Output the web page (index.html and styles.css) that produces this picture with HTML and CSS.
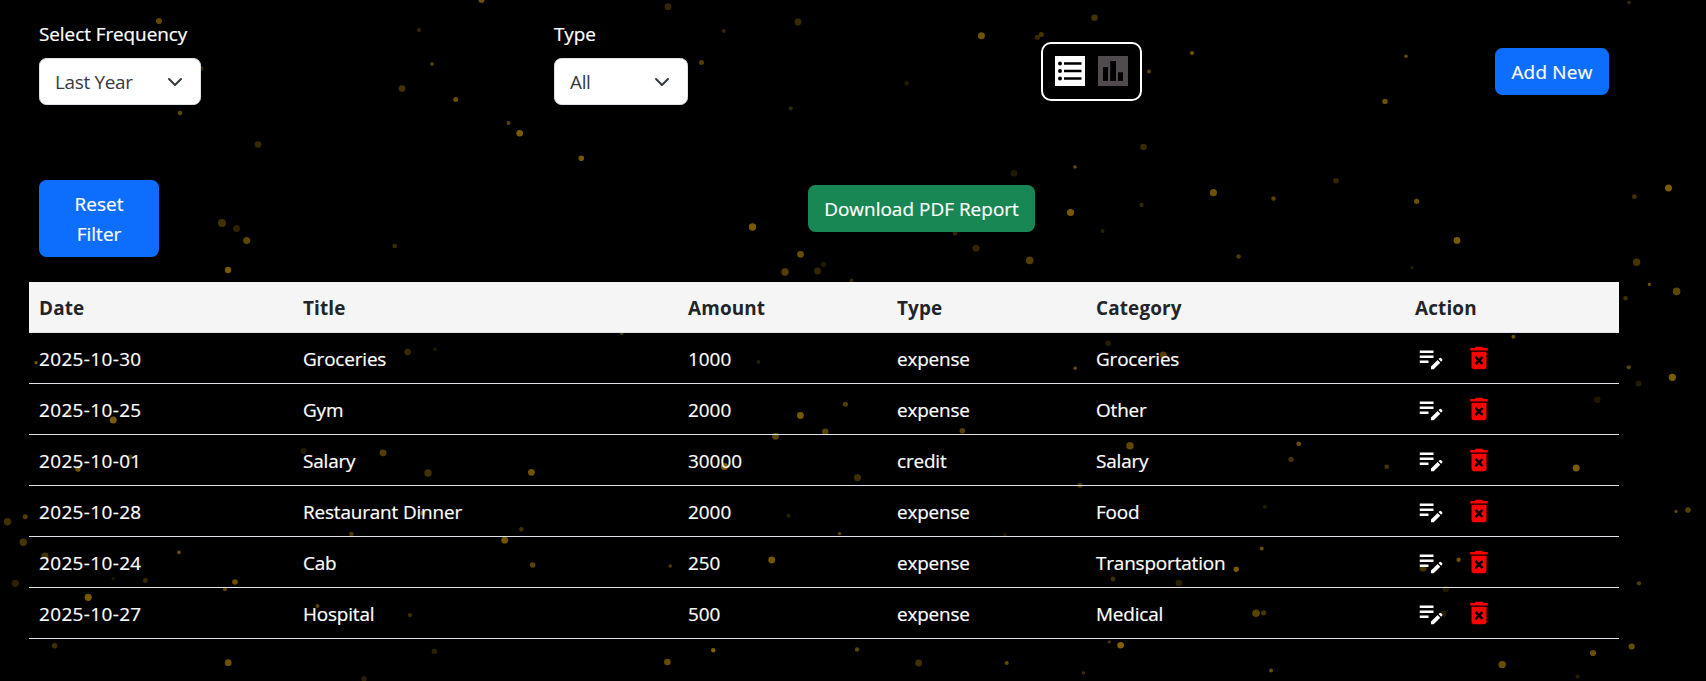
FILE: index.html
```html
<!DOCTYPE html>
<html lang="en">
<head>
<meta charset="utf-8">
<title>Transactions</title>
<link rel="stylesheet" href="styles.css">
</head>
<body>
<svg class="particles" id="particles" width="1706" height="681" aria-hidden="true"></svg>

<svg class="defs" aria-hidden="true">
  <symbol id="i-chevron" viewBox="0 0 16 16"><path d="m2 5 6 6 6-6" fill="none" stroke="#343a40" stroke-width="2" stroke-linecap="round" stroke-linejoin="round"/></symbol>
  <symbol id="i-edit" viewBox="0 0 24 24"><path d="M3 10h11v2H3v-2zm0-2h11V6H3v2zm0 8h7v-2H3v2zm15.01-3.13.71-.71a.996.996 0 0 1 1.41 0l.71.71c.39.39.39 1.02 0 1.41l-.71.71-2.12-2.12zm-.71.71-5.3 5.3V21h2.12l5.3-5.3-2.12-2.12z"/></symbol>
  <symbol id="i-delete" viewBox="0 0 24 24"><path d="M6 19c0 1.1.9 2 2 2h8c1.1 0 2-.9 2-2V7H6v12zm2.46-7.12 1.41-1.41L12 12.59l2.12-2.12 1.41 1.41L13.41 14l2.12 2.12-1.41 1.41L12 15.41l-2.12 2.12-1.41-1.41L10.59 14l-2.13-2.12zM15.5 4l-1-1h-5l-1 1H5v2h14V4z"/></symbol>
</svg>

<main class="page">
  <section class="filters">
    <div class="field">
      <span class="label">Select Frequency</span>
      <div class="select select-frequency"><span>Last Year</span><svg class="chevron"><use href="#i-chevron"/></svg></div>
    </div>
    <div class="field">
      <span class="label">Type</span>
      <div class="select select-type"><span>All</span><svg class="chevron"><use href="#i-chevron"/></svg></div>
    </div>
    <div class="views">
      <svg class="view view-on" viewBox="0 0 30 30"><path d="M0 0h30v30H0z"/><g fill="#000"><circle cx="5" cy="7.4" r="2"/><circle cx="5" cy="14.9" r="2"/><circle cx="5" cy="22.4" r="2"/><path d="M9 6.2h17.5v2.6H9zM9 13.7h17.5v2.6H9zM9 21.2h17.5v2.6H9z"/></g></svg>
      <svg class="view view-off" viewBox="0 0 30 30"><path d="M0 0h30v30H0z"/><path fill="#000" d="M5 11h5v14H5zM12.2 5h5.8v20h-5.8zM20 16.3h5V25h-5z"/></svg>
    </div>
    <button class="btn btn-primary">Add New</button>
  </section>

  <section class="actions">
    <button class="btn btn-primary btn-reset">Reset Filter</button>
    <button class="btn btn-success">Download PDF Report</button>
  </section>

  <table class="table">
    <colgroup><col class="c-date"><col class="c-title"><col class="c-amount"><col class="c-type"><col class="c-category"><col></colgroup>
    <thead><tr><th>Date</th><th>Title</th><th>Amount</th><th>Type</th><th>Category</th><th>Action</th></tr></thead>
    <tbody>
      <tr><td class="date">2025-10-30</td><td>Groceries</td><td class="amount">1000</td><td>expense</td><td>Groceries</td><td class="action"><div class="icons"><svg class="edit"><use href="#i-edit"/></svg><svg class="delete"><use href="#i-delete"/></svg></div></td></tr>
      <tr><td class="date">2025-10-25</td><td>Gym</td><td class="amount">2000</td><td>expense</td><td>Other</td><td class="action"><div class="icons"><svg class="edit"><use href="#i-edit"/></svg><svg class="delete"><use href="#i-delete"/></svg></div></td></tr>
      <tr><td class="date">2025-10-01</td><td>Salary</td><td class="amount">30000</td><td>credit</td><td>Salary</td><td class="action"><div class="icons"><svg class="edit"><use href="#i-edit"/></svg><svg class="delete"><use href="#i-delete"/></svg></div></td></tr>
      <tr><td class="date">2025-10-28</td><td>Restaurant Dinner</td><td class="amount">2000</td><td>expense</td><td>Food</td><td class="action"><div class="icons"><svg class="edit"><use href="#i-edit"/></svg><svg class="delete"><use href="#i-delete"/></svg></div></td></tr>
      <tr><td class="date">2025-10-24</td><td>Cab</td><td class="amount">250</td><td>expense</td><td>Transportation</td><td class="action"><div class="icons"><svg class="edit"><use href="#i-edit"/></svg><svg class="delete"><use href="#i-delete"/></svg></div></td></tr>
      <tr><td class="date">2025-10-27</td><td>Hospital</td><td class="amount">500</td><td>expense</td><td>Medical</td><td class="action"><div class="icons"><svg class="edit"><use href="#i-edit"/></svg><svg class="delete"><use href="#i-delete"/></svg></div></td></tr>
    </tbody>
  </table>
</main>
<script src="particles.js"></script>
</body>
</html>
```

FILE: styles.css
```css
* { box-sizing: border-box; }

body {
  margin: 0;
  height: 681px;
  overflow: hidden;
  background: #000;
  color: #fff;
  font-family: "Open Sans", "Noto Sans", sans-serif;
  font-size: 18.9px;
  line-height: 30px;
}

.particles {
  position: absolute;
  top: 0;
  left: 0;
  z-index: -1;
  fill: #ffc000;
}

.defs { display: none; }

.page {
  width: 1590px;
  margin-left: 29px;
}

.filters {
  display: flex;
  justify-content: space-between;
  align-items: flex-start;
  height: 105px;
  padding: 19px 10px 0;
}

.field {
  display: flex;
  flex-direction: column;
  gap: 9px;
}

.label {
  letter-spacing: -0.05px;
  -webkit-text-stroke: 0.2px currentColor;
}

.select {
  display: flex;
  align-items: center;
  justify-content: space-between;
  height: 47px;
  padding: 0 17px 0 15px;
  border: 1px solid #dee2e6;
  border-radius: 7.5px;
  background: #fff;
  color: #343a40;
  letter-spacing: -0.3px;
}

.select-frequency { width: 162px; }
.select-type { width: 134px; }
.chevron { width: 16px; height: 16px; }

.views {
  display: flex;
  gap: 13px;
  width: 101px;
  height: 59px;
  margin-top: 23px;
  padding: 12px;
  border: 2px solid #fff;
  border-radius: 10px;
}

.view { width: 30px; height: 30px; }
.view-on { fill: #fff; }
.view-off { fill: #514b4f; }

.btn {
  height: 47px;
  padding: 0;
  border: 1px solid transparent;
  border-radius: 7.5px;
  color: #fff;
  font: inherit;
  letter-spacing: 0.05px;
  white-space: nowrap;
  -webkit-text-stroke: 0.2px currentColor;
}

.filters .btn { margin-top: 29px; letter-spacing: 0.25px; }

.btn-primary { width: 114px; background: #0d6efd; }
.btn-success { width: 227px; margin-top: 5px; background: #198754; }

.actions {
  display: flex;
  align-items: flex-start;
  justify-content: space-between;
  height: 77px;
  margin-top: 75px;
  padding: 0 584px 0 10px;
}

.actions .btn-reset {
  width: 120px;
  height: 77px;
  padding: 0 15px;
  white-space: normal;
}

.table {
  width: 1590px;
  margin-top: 25px;
  border-collapse: separate;
  border-spacing: 0;
  table-layout: fixed;
}

.table th, .table td {
  height: 51px;
  padding: 11px 10px 9px;
  border-bottom: 1px solid #dee2e6;
  text-align: left;
  vertical-align: middle;
}

.table th {
  background: #f5f5f5;
  color: #212529;
  font-weight: 700;
  letter-spacing: 0.15px;
}

.table td {
  letter-spacing: -0.15px;
  -webkit-text-stroke: 0.2px currentColor;
}

.table .date { letter-spacing: 0.4px; }
.table .amount { letter-spacing: 0; }
.table .action { padding: 10px 10px 10px 11px; }

.c-date { width: 264px; }
.c-title { width: 385px; }
.c-amount { width: 209px; }
.c-type { width: 199px; }
.c-category { width: 319px; }

.icons { display: flex; gap: 18px; height: 30px; }
.icons svg { width: 30px; height: 30px; }
.edit { fill: #fff; }
.delete { fill: #f00; }
```

FILE: particles.js
```js
// Each particle: x, y, radius, opacity
const particles = [
  [159,21,3,.38],[419,30,2,.2],[201,68.5,2.5,.2],[402,88.5,3.3,.27],[180,113,2.3,.36],[258,144.5,3.3,.22],
  [222,223,4,.26],[236.5,228.5,3.5,.18],[246.7,240.5,3.6,.36],[394.7,246,2.3,.22],[228,270,3.2,.46],
  [481.5,0,3,.42],[668,6.7,3.4,.2],[798,22,3.4,.22],[723.7,31,2,.2],[432,64,2,.32],[701.5,62.5,2.5,.32],
  [455.7,99.5,2.5,.4],[790.7,108.3,2.1,.2],[508.5,123,2,.34],[519.7,133.3,3.3,.48],[581.3,158.3,2.8,.46],
  [752.5,227,3.7,.47],[800.5,254.3,3.4,.4],[785,272,3.7,.33],[817.5,271,3.4,.2],[823.5,264.5,2.7,.12],
  [851.5,280.5,2,.2],[621.7,333,2,.3],
  [1094.5,17.7,3.3,.26],[981.4,35.7,3.5,.43],[1041.3,34.5,2.5,.28],[1037.3,37.3,2.5,.22],[1192,53,2.1,.43],
  [1149,71.6,2,.34],[906.7,83.3,2.3,.13],[1143.5,147,3.3,.22],[1075,167,1.7,.42],[1014,173.3,3.3,.12],
  [1213.4,192.7,3.6,.43],[1273.5,198.6,2.3,.34],[1141.5,205,2.2,.2],[1070.5,212.5,3.6,.46],[1102.6,231,1.9,.16],
  [955,233,2.4,.2],[976,248.3,3.4,.2],[1029.7,260.4,3.8,.33],[1238.6,256.5,2.3,.3],
  [1629,2.5,1.8,.22],[1406,56.3,1.8,.38],[1385,101.4,2.7,.42],[1336,180.7,2.8,.2],[1416.6,201.3,2.6,.42],
  [1668.5,188,3.5,.47],[1634.4,196.7,2.4,.26],[1457,240.4,3.4,.47],[1412,267.5,1.8,.13],[1636.6,262.3,3.7,.27],
  [1649.4,284.4,1.6,.42],[1676.6,291.4,3.8,.36],[1625.6,298.3,2.3,.24],[1513.4,336.8,2,.42],
  [36,362.7,1.6,.46],[407.7,352,3.2,.22],[113.2,420,3.5,.48],[68.5,412.5,3,.2],[130.3,457,2.5,.25],[78,469,2.7,.45],
  [303.6,451,3,.13],[383,452.8,3.4,.33],[428,473,3.7,.26],[423,513,2.6,.43],[25.2,516.7,2.5,.32],[7.5,521.7,3.7,.25],
  [351.4,534,2.3,.3],[23.3,542.2,3.7,.28],[45,556,3.6,.26],[179,552.3,1.9,.4],[15.3,583.3,3.6,.17],
  [113.2,578.8,1.8,.12],[145.3,580.5,2.4,.22],[235,582,2.8,.42],[225,589.3,2,.36],[88.2,597.3,3.6,.46],
  [317.5,606,2,.35],[410,615.2,2.1,.24],[54.6,645.7,2.7,.25],[228.2,662.7,3.4,.42],[364,678.7,2.7,.16],
  [435,349.3,1.8,.14],[758.4,362,2,.16],[845.4,404.3,2.5,.33],[800.4,415.5,3.4,.46],[825.3,431.7,3.2,.34],
  [775.5,436.3,3.4,.36],[724.5,466.5,3.5,.5],[531.4,472.3,3.4,.44],[857.5,477.6,3.6,.24],[788.5,515.7,2,.16],
  [839.5,533.6,1.7,.38],[521.4,529.3,2.2,.25],[504.7,540.2,3.4,.45],[532.6,565,2.8,.35],[771.7,560,3.4,.46],
  [670.2,566,1.7,.3],[434.4,651.4,2.7,.17],[713.2,650.3,2.2,.5],[857,649.5,2.2,.35],[667.4,662,3.3,.4],
  [1108.2,343.2,2.8,.15],[1163.3,355,3.6,.32],[1075.2,368.2,1.7,.4],[962.4,430.8,2.8,.32],[1130,445.7,3.8,.37],
  [1080,485.3,2.6,.28],[1265,506.7,2,.14],[1005,535,2,.13],[1261.7,548.6,2,.4],[1236.2,569.2,2.7,.46],
  [1113,579,2.4,.25],[1179,583,3.3,.16],[1256,613.2,3.8,.35],[1263.6,612.8,2.6,.27],[1109.3,642,1.6,.3],
  [1120.6,645.3,3.3,.5],[918.7,663,3.4,.25],[1006.7,663,2.1,.38],[1083.5,673,1.7,.25],[1271,670.6,2,.4],
  [965,512,2,.2],[1628.7,367.3,2.1,.35],[1672.3,377.3,3.6,.48],[1638.5,383.6,2.9,.15],[1597.2,399.7,3.3,.12],
  [1298.7,443.8,2.4,.4],[1291,459.4,2.7,.26],[1386.7,466.7,2.3,.28],[1576.2,468,3.5,.47],[1676,511.4,1.7,.36],
  [1688,510,2.8,.32],[1423,568,3.5,.28],[1458.6,559.7,2.2,.42],[1445.7,589,3.2,.13],[1639,583.3,2.1,.33],
  [1443.5,613.6,3,.15],[1631.7,646.5,3.1,.4],[1593,653,3.1,.4],[1502.2,664.6,3.7,.4],[1577.6,676.6,2.2,.14]
];

const layer = document.getElementById("particles");
for (const [x, y, r, opacity] of particles) {
  const dot = document.createElementNS("http://www.w3.org/2000/svg", "circle");
  dot.setAttribute("cx", x);
  dot.setAttribute("cy", y);
  dot.setAttribute("r", r);
  dot.setAttribute("fill-opacity", opacity);
  layer.appendChild(dot);
}
```
